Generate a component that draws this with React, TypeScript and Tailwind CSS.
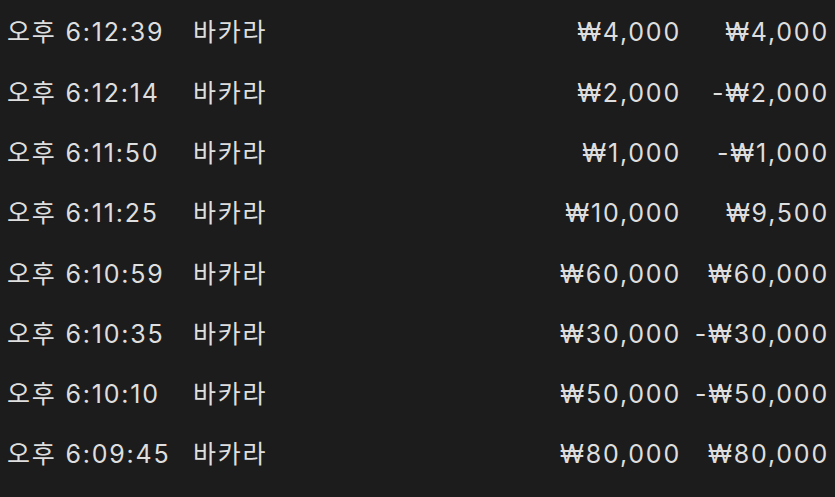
const rows = [
  { time: '오후 6:12:39', game: '바카라', bet: '₩4,000', net: '₩4,000' },
  { time: '오후 6:12:14', game: '바카라', bet: '₩2,000', net: '-₩2,000' },
  { time: '오후 6:11:50', game: '바카라', bet: '₩1,000', net: '-₩1,000' },
  { time: '오후 6:11:25', game: '바카라', bet: '₩10,000', net: '₩9,500' },
  { time: '오후 6:10:59', game: '바카라', bet: '₩60,000', net: '₩60,000' },
  { time: '오후 6:10:35', game: '바카라', bet: '₩30,000', net: '-₩30,000' },
  { time: '오후 6:10:10', game: '바카라', bet: '₩50,000', net: '-₩50,000' },
  { time: '오후 6:09:45', game: '바카라', bet: '₩80,000', net: '₩80,000' },
];

export default function App() {
  return (
    <div
      className="w-[835px] h-[497px] bg-[#1c1c1c] text-[#dedede] pt-[3px] pl-[7px] pr-[6px] text-[25px] tracking-[1.8px]"
      style={{ fontFamily: 'Inter, "Noto Sans CJK KR", sans-serif' }}
    >
      {rows.map((r, i) => (
        <div key={i} className="flex items-center h-[60.3px]">
          <div className="w-[186px] whitespace-nowrap">{r.time}</div>
          <div className="flex-1">{r.game}</div>
          <div className="text-right whitespace-nowrap">{r.bet}</div>
          <div className="w-[148px] text-right whitespace-nowrap">{r.net}</div>
        </div>
      ))}
    </div>
  );
}
